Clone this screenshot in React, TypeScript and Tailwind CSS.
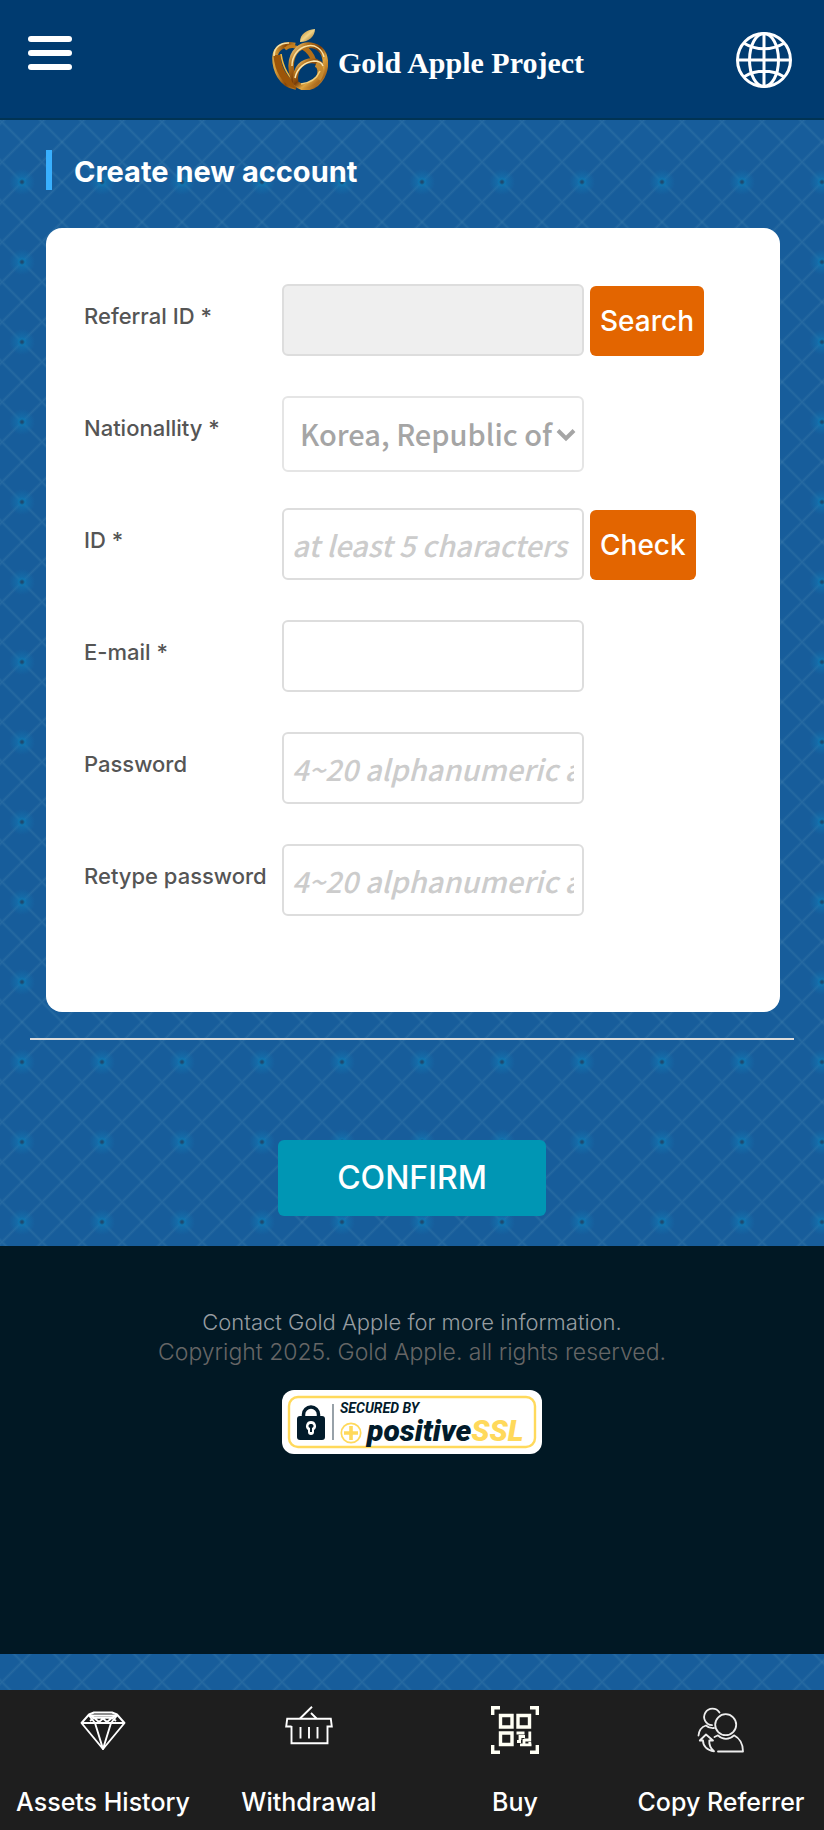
import type { InputHTMLAttributes, ReactNode } from 'react';
import { clsx } from 'clsx';

const navItems = [
  { name: 'Assets History', href: '#assets', icon: DiamondIcon },
  { name: 'Withdrawal', href: '#withdrawal', icon: BasketIcon },
  { name: 'Buy', href: '#buy', icon: QrIcon },
  { name: 'Copy Referrer', href: '#referrer', icon: ReferrerIcon },
];

function AppleLogo() {
  return (
    <svg width="56" height="62" viewBox="0 0 56 62" fill="none" aria-hidden="true">
      <defs>
        <linearGradient id="gold" x1="0" y1="0" x2="1" y2="1">
          <stop offset="0" stopColor="#f6dc96" />
          <stop offset="0.22" stopColor="#b8741c" />
          <stop offset="0.45" stopColor="#7a3d08" />
          <stop offset="0.65" stopColor="#e0a640" />
          <stop offset="0.85" stopColor="#a9681b" />
          <stop offset="1" stopColor="#f3d68c" />
        </linearGradient>
        <linearGradient id="goldDark" x1="0" y1="0" x2="1" y2="0">
          <stop offset="0" stopColor="#d9a03c" />
          <stop offset="0.5" stopColor="#8a4706" />
          <stop offset="1" stopColor="#c98a2c" />
        </linearGradient>
        <linearGradient id="leaf" x1="0" y1="0" x2="1" y2="1">
          <stop offset="0" stopColor="#b47a20" />
          <stop offset="0.5" stopColor="#f0d488" />
          <stop offset="1" stopColor="#8f5a12" />
        </linearGradient>
      </defs>
      <path d="M28 14C28 6 34 2 43 1C43 8 37 14 28 14Z" fill="url(#leaf)" />
      <path d="M24 59C9 57 2.500 41 3 29C3.500 20 12 15 23 17.500" stroke="url(#goldDark)" strokeWidth="5.500" />
      <path d="M5 27C6 42 13 54 25 58" stroke="#9c5508" strokeWidth="7" />
      <path d="M9 26C11 40 17 50 26 56" stroke="#f3b93e" strokeWidth="1.600" />
      <path d="M2 28C2 19 9 14.500 17 15" stroke="#f5dfa2" strokeWidth="1.600" />
      <path d="M13 21C18 17 24 18 27 21" stroke="#c27d1d" strokeWidth="3.500" />
      <path d="M31 19C36 22 40 27 42 33" stroke="#b36f18" strokeWidth="5" />
      <path d="M25 57C17 45 17 29 26 21C35 14 48 17 52 27C56 39 51 52 41 58C34 61 28 60 25 56" stroke="url(#gold)" strokeWidth="5.500" />
      <path d="M20 38C20 28 26 20 35 18C43 16 50 21 52 29" stroke="#f8e2a5" strokeWidth="1.500" />
      <path d="M24 54C22 44 27 35 37 33C45 32 51 36 50 42C48 53 35 61 27 57C24 56 23 54 24 52" stroke="url(#gold)" strokeWidth="5" />
      <path d="M44 36C49 38 50 45 46 51" stroke="#c58a30" strokeWidth="6" />
      <path d="M23 50C25 40 33 34 42 33C47 33 50 35 51 38" stroke="#fbe8b2" strokeWidth="1.500" />
      <path d="M29 56C38 55 45 50 48 43" stroke="#f4cf7a" strokeWidth="1.600" />
    </svg>
  );
}

function GlobeIcon() {
  return (
    <svg width="56" height="56" viewBox="0 0 56 56" fill="none" stroke="white" strokeWidth="3" aria-hidden="true">
      <circle cx="28" cy="28" r="26.500" />
      <ellipse cx="28" cy="28" rx="14.500" ry="26.500" />
      <path d="M28 2V54M2 28H54M8.500 11.500C20 18.500 36 18.500 47.500 11.500M8.500 44.500C20 37.500 36 37.500 47.500 44.500" />
    </svg>
  );
}

function DiamondIcon() {
  return (
    <svg width="48" height="48" viewBox="0 0 48 48" fill="none" stroke="white" strokeWidth="1.900" strokeLinejoin="round" aria-hidden="true">
      <path d="M2.500 17L10 8.500L15 6.500H33L38 8.500L45.500 17L24 43Z" />
      <path d="M2.500 17H45.500M10 9.500L16 17L24 43L32 17L38 9.500" />
      <path d="M10 9.500H38L33 11.800H15ZM11 15L15 11.800L20 16L24 12.500L28 16L33 11.800L37 15" />
    </svg>
  );
}

function BasketIcon() {
  return (
    <svg width="48" height="48" viewBox="0 0 48 48" fill="none" stroke="white" strokeWidth="1.900" aria-hidden="true">
      <path d="M6.500 20.500H1.200L2.200 12.800H45.800L46.800 20.500H42.500V37.200H6.500V20" />
      <path d="M15.500 21V32.500M24 21V32.500M32.500 21V32.500" />
      <path d="M15 12.500L27 0.800M26 7L31.500 12.500" />
    </svg>
  );
}

function QrIcon() {
  return (
    <svg width="48" height="48" viewBox="0 0 48 48" fill="none" stroke="#fffff4" aria-hidden="true">
      <path d="M1.700 9V1.700H9M39 1.700H46.300V9M46.300 39V46.300H39M9 46.300H1.700V39" strokeWidth="3.400" />
      <path d="M9.500 9.500H21V21H9.500ZM27 9.500H38.500V21H27ZM9.500 27H21V38.500H9.500Z" strokeWidth="3.400" />
      <path d="M25.500 27H33.500M38.800 25.500V34H33M34 30.500H29V34M26 35.500H30M33 33V40M29 38.800H40.500M38.800 36V40" strokeWidth="2.800" />
    </svg>
  );
}

function ReferrerIcon() {
  return (
    <svg width="48" height="48" viewBox="0 0 48 48" fill="none" stroke="#eeeeee" strokeWidth="1.800" strokeLinecap="round" strokeLinejoin="round" aria-hidden="true">
      <circle cx="28.700" cy="18.700" r="10.500" />
      <path d="M22.500 6.500A8.300 8.300 0 1 0 15 19.200" />
      <path d="M1.500 29.500C2 24.500 4.500 21 9 19.500C11 21.500 13.500 22.300 17 22" />
      <path d="M17.500 31L21 29.300C26 34 32 34 37 29.300C43 32.500 46 38 46 45.500H21" />
      <path d="M9 28.500L2.800 34.500H6C6 40 10 44.500 17 45.300C13.500 42.500 12 39 12.300 34.500H16Z" />
    </svg>
  );
}

function SslBadge() {
  return (
    <svg width="260" height="64" viewBox="0 0 260 64" fill="none" role="img" aria-label="Secured by positiveSSL">
      <rect width="260" height="64" rx="12" fill="white" />
      <rect x="7" y="7" width="246" height="50" rx="9" stroke="#ffd95b" strokeWidth="2.400" />
      <path d="M21.500 28V24.500A7.500 7.500 0 0 1 36.500 24.500V28" stroke="#021b2b" strokeWidth="3.500" />
      <rect x="15" y="26" width="28" height="24" rx="3" fill="#021b2b" />
      <path d="M29 31A5 5 0 0 0 26 40V42Q26 45 29 45T32 42V40A5 5 0 0 0 29 31Z" fill="white" />
      <path d="M29 34A2 2 0 0 0 28 38V42H30V38A2 2 0 0 0 29 34Z" fill="#021b2b" />
      <path d="M51 14V50" stroke="#6c7a84" strokeWidth="1.400" />
      <circle cx="69" cy="43" r="9.700" stroke="#ffd95b" strokeWidth="1.700" />
      <path d="M69 36V50M62 43H76" stroke="#ffd95b" strokeWidth="3.600" />
      <g fontFamily="Roboto, sans-serif" fontStyle="italic">
        <text x="58" y="23" fontSize="14" fontWeight="700" fill="#021b2b">SECURED BY</text>
        <text x="85" y="51" fontSize="30" fontWeight="900" fill="#021b2b">
          positive<tspan fill="#ffd95b">SSL</tspan>
        </text>
      </g>
    </svg>
  );
}

function Field({ id, label, children }: { id: string; label: string; children: ReactNode }) {
  return (
    <div className="flex h-28 items-start">
      <label htmlFor={id} className="w-[198px] shrink-0 text-[22px] leading-16 font-medium whitespace-nowrap text-[#555]">
        {label}
      </label>
      <div className="flex items-start gap-1.5">{children}</div>
    </div>
  );
}

function TextBox({ className, ...props }: InputHTMLAttributes<HTMLInputElement>) {
  return (
    <input
      className={clsx(
        "h-18 w-[302px] rounded-md border-2 border-[#ddd] px-2 font-['Noto_Sans_CJK_KR',sans-serif] text-[29px] font-medium text-[#555] placeholder:text-[#ccc] placeholder:italic",
        className
      )}
      {...props}
    />
  );
}

function SideButton({ children }: { children: ReactNode }) {
  return (
    <button type="button" className="mt-0.5 h-[70px] rounded-md bg-[#e36500] px-2.5 text-[28px] font-medium text-white">
      {children}
    </button>
  );
}

export default function App() {
  return (
    <div className="flex min-h-screen flex-col bg-[#175d9b] bg-[radial-gradient(circle,#1d4a70_0,#1d4a70_1px,#0f75b0_3px,#1278b480_5px,transparent_13px),linear-gradient(45deg,transparent_calc(50%_-_2px),#4583b050_50%,transparent_calc(50%_+_2px)),linear-gradient(135deg,transparent_calc(50%_-_2px),#4583b050_50%,transparent_calc(50%_+_2px))] bg-[size:80px_80px,40px_40px,40px_40px] bg-[position:-18px_-18px,2px_2px,2px_2px] font-['Inter',sans-serif]">
      <header className="grid h-30 grid-cols-[1fr_auto_1fr] items-start border-b-2 border-[#003354] bg-[#003b70] pr-8 pl-7">
        <button type="button" aria-label="Menu" className="mt-9 flex w-11 flex-col gap-2">
          <span className="h-1.5 w-full rounded-sm bg-white" />
          <span className="h-1.5 w-full rounded-sm bg-white" />
          <span className="h-1.5 w-full rounded-sm bg-white" />
        </button>
        <a href="#home" className="mt-7 flex items-center gap-2.5 pl-9">
          <AppleLogo />
          <span className="pt-1.5 font-['Liberation_Serif',serif] text-[30px] font-bold text-white">Gold Apple Project</span>
        </a>
        <button type="button" aria-label="Language" className="mt-8 justify-self-end">
          <GlobeIcon />
        </button>
      </header>

      <main className="flex flex-col pt-[30px] pb-[30px]">
        <h1 className="ml-[46px] border-l-6 border-[#38b0ff] pt-1 pl-[22px] text-[29px] leading-9 font-bold text-white">
          Create new account
        </h1>

        <form>
          {/* Account details */}
          <div className="mt-[38px] mr-11 ml-[46px] rounded-2xl bg-white py-14 pl-[38px]">
            <Field id="referral" label="Referral ID *">
              <TextBox id="referral" readOnly className="bg-[#efefef]" />
              <SideButton>Search</SideButton>
            </Field>
            <Field id="nation" label="Nationallity *">
              <div className="relative">
                <select
                  id="nation"
                  className="h-19 w-[302px] appearance-none rounded-md border-2 border-[#e5e5e5] bg-white pl-4 font-['Noto_Sans_CJK_KR',sans-serif] text-[29px] font-medium text-[#a5a5a5]"
                >
                  <option>Korea, Republic of</option>
                </select>
                <svg className="pointer-events-none absolute top-8 right-2" width="20" height="14" viewBox="0 0 20 14" fill="none" stroke="#a5a5a5" strokeWidth="4" aria-hidden="true">
                  <path d="M2 2.500L10 10.500L18 2.500" />
                </svg>
              </div>
            </Field>
            <Field id="userId" label="ID *">
              <TextBox id="userId" placeholder="at least 5 characters" />
              <SideButton>Check</SideButton>
            </Field>
            <Field id="email" label="E-mail *">
              <TextBox id="email" type="email" />
            </Field>
            <Field id="password" label="Password">
              <TextBox id="password" type="password" placeholder="4~20 alphanumeric and symbols" />
            </Field>
            <Field id="password2" label="Retype password">
              <TextBox id="password2" type="password" placeholder="4~20 alphanumeric and symbols" />
            </Field>
          </div>

          <hr className="mx-[30px] mt-[26px] border-t-2 border-[#ddd]" />

          <div className="mt-25 flex justify-center">
            <button type="submit" className="h-19 w-[268px] rounded-md bg-[#0096b4] text-[32px] font-medium text-white">
              CONFIRM
            </button>
          </div>
        </form>
      </main>

      <footer className="flex flex-col items-center bg-[#011824] pt-[61px] pb-50 text-center font-light">
        <p className="text-[22px] leading-[30px] text-[#979da1]">Contact Gold Apple for more information.</p>
        <p className="text-[23px] leading-[30px] text-[#666]">Copyright 2025. Gold Apple. all rights reserved.</p>
        <a href="#ssl" className="mt-[23px]">
          <SslBadge />
        </a>
      </footer>

      {/* Bottom navigation */}
      <nav className="mt-auto grid h-35 grid-cols-4 bg-[#1e1e1e]">
        {navItems.map((item) => (
          <a key={item.name} href={item.href} className="flex flex-col items-center gap-7 pt-4 text-[25px] leading-10 font-medium whitespace-nowrap text-white">
            <item.icon />
            {item.name}
          </a>
        ))}
      </nav>
    </div>
  );
}
